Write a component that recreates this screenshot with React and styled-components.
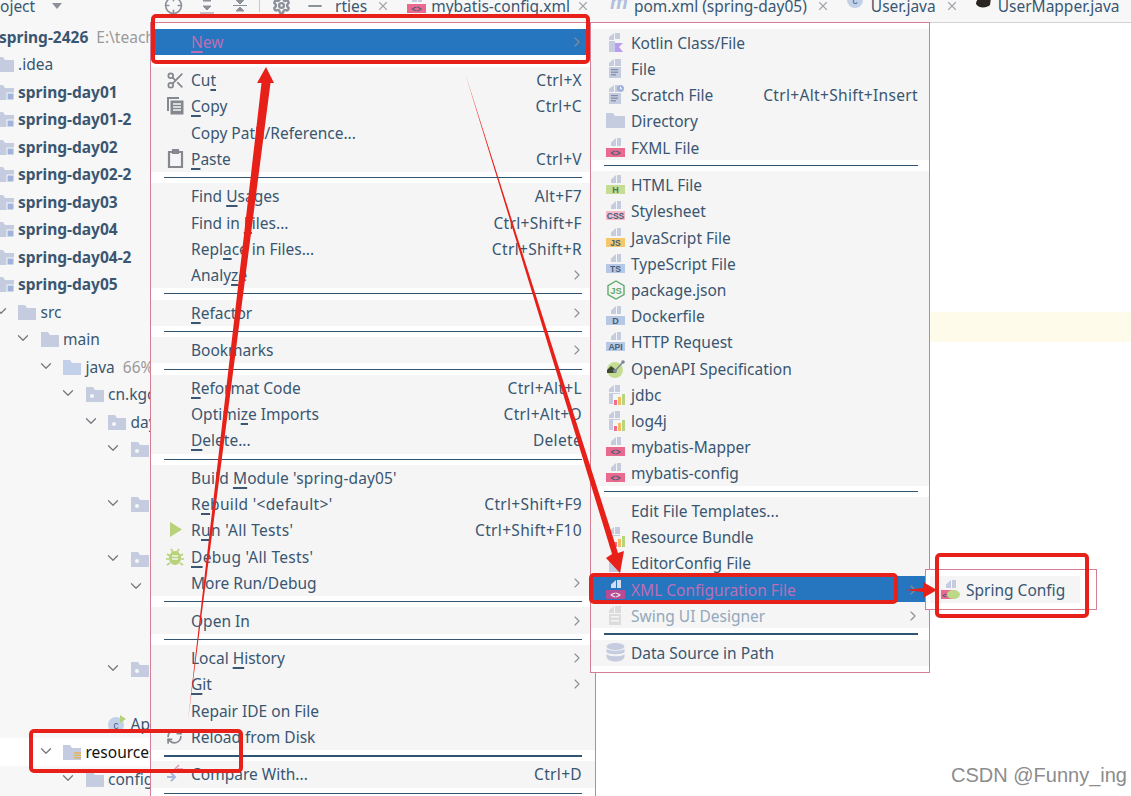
import React from "react";
import styled, { createGlobalStyle } from "styled-components";
import { X, Settings, Minus, Scissors, RefreshCw, Crosshair, ChevronDown, ChevronRight } from "lucide-react";

const GlobalStyle = createGlobalStyle`
  html, body {
    margin: 0;
    padding: 0;
    width: 1131px;
    height: 796px;
    overflow: hidden;
    background: #fff;
  }
  * { box-sizing: border-box; }
`;

const Page = styled.div`
  position: relative;
  display: flex;
  width: 1131px;
  height: 796px;
  overflow: hidden;
  background: #fff;
  color: #3a5671;
  font-family: "Noto Sans", "Open Sans", sans-serif;
  font-size: 15.5px;
`;

const Sidebar = styled.div`
  width: 330px;
  flex-shrink: 0;
  background: #f7f7f7;
`;

const ToolHeader = styled.div`
  display: flex;
  height: 23px;
  overflow: hidden;
  align-items: flex-start;
`;

const ToolTitle = styled.div`
  width: 52px;
  line-height: 12px;
  flex-shrink: 0;
`;

const TitleArrow = styled.div`
  width: 0;
  height: 0;
  margin: 3px 95px 0 0;
  border-left: 5px solid transparent;
  border-right: 5px solid transparent;
  border-top: 6px solid #8b9099;
  flex-shrink: 0;
`;

const ToolButton = styled.div`
  width: 33px;
  display: flex;
  justify-content: center;
  margin-top: -4px;
  color: #8b9099;
  flex-shrink: 0;
`;

const ToolDivider = styled.div`
  width: 1px;
  height: 12px;
  margin: 0 5px 0 3px;
  background: #c9c9c9;
  flex-shrink: 0;
`;

const indent = (depth) => depth * 22.5 - 4.5;

const TreeRow = styled.div`
  display: flex;
  align-items: center;
  height: 27.5px;
  white-space: nowrap;
  background: ${(p) => (p.$selected ? "#fff" : "transparent")};
  margin-left: ${(p) => Math.min(0, indent(p.$depth))}px;
  padding-left: ${(p) => Math.max(0, indent(p.$depth))}px;
  color: ${(p) => (p.$selected ? "#111" : "#3a5671")};
  font-weight: ${(p) => (p.$bold ? 700 : 400)};
`;

const TreeChevron = styled.div`
  width: 22.5px;
  display: flex;
  color: #77797f;
  flex-shrink: 0;

  svg {
    margin: -2px 0 0 -4px;
  }
`;

const TreeIcon = styled.div`
  width: 22.5px;
  height: 18px;
  flex-shrink: 0;
`;

const Hint = styled.span`
  margin-left: 8px;
  color: #9a9a9a;
  font-weight: 400;
`;

const Content = styled.div`
  flex: 1;
  min-width: 0;
`;

const TabBar = styled.div`
  display: flex;
  align-items: flex-start;
  height: 23px;
  padding-left: 5px;
  background: #f7f7f7;
  border-bottom: 1px solid #d2d2d2;
  overflow: hidden;
`;

const Tab = styled.div`
  display: flex;
  align-items: flex-start;
  flex-shrink: 0;
  margin-right: ${(p) => p.$gap}px;
  line-height: 12px;
  white-space: nowrap;
`;

const TabIcon = styled.div`
  width: 24px;
  height: 12px;
  flex-shrink: 0;
  margin-top: -6px;
`;

const TabClose = styled.div`
  display: flex;
  margin: -1px 0 0 ${(p) => p.$gap || 9}px;
  color: #a3a7ad;
`;

const Editor = styled.div`
  padding-top: 289px;
`;

const CaretLine = styled.div`
  height: 30px;
  background: #fffbea;
`;

const Menu = styled.div`
  position: absolute;
  left: ${(p) => p.$left}px;
  top: ${(p) => p.$top}px;
  width: ${(p) => p.$width}px;
  padding: ${(p) => p.$pad}px 0;
  background: #fff;
  border: 1px solid #d67d96;
`;

const MenuRow = styled.div`
  display: flex;
  align-items: center;
  height: 26.2px;
  padding-left: 15px;
  padding-right: ${(p) => p.$inset}px;
  padding-top: ${(p) => p.$nudge || 0}px;
  white-space: nowrap;
  background: ${(p) => (p.$active ? "#2675bf" : "#f5f5f5")};
  color: ${(p) => (p.$active ? "#bd6fb4" : p.$disabled ? "#92a8bc" : "#3a5671")};
`;

const MenuIcon = styled.div`
  width: 25px;
  height: 20px;
  flex-shrink: 0;
  display: flex;
  align-items: center;
`;

const MenuLabel = styled.span`
  flex: 1;
  letter-spacing: ${(p) => p.$spread || 0}px;
`;

const Keys = styled.span`
  letter-spacing: 0.33px;
`;

const Mnemonic = styled.span`
  text-decoration: underline;
  text-underline-offset: 3px;
  text-decoration-thickness: 1.5px;
`;

const RowChevron = styled.div`
  display: flex;
  color: #8a8d92;
  margin-right: -3px;
`;

const Separator = styled.div`
  display: flex;
  align-items: center;
  height: ${(p) => (p.$tall ? 11.9 : 11.5)}px;
  padding: 0 ${(p) => p.$inset}px 0 13px;
`;

const SeparatorLine = styled.div`
  width: 100%;
  height: ${(p) => (p.$thick ? 2 : 1)}px;
  background: #305472;
`;

const SpringMenu = styled.div`
  position: absolute;
  left: 925px;
  top: 569px;
  width: 172px;
  height: 41px;
  padding: 6px 16px 6px 4px;
  background: #fff;
  border: 1px solid #d67d96;
`;

const SpringRow = styled.div`
  display: flex;
  align-items: center;
  height: 27px;
  padding-left: 11px;
  background: #f5f5f5;
  white-space: nowrap;
`;

const Annotations = styled.svg`
  position: absolute;
  left: 0;
  top: 0;
  width: 1131px;
  height: 796px;
  pointer-events: none;
`;

const Watermark = styled.div`
  position: absolute;
  right: 4px;
  top: 764px;
  color: #8c8c8c;
  font-family: "Liberation Sans", sans-serif;
  font-size: 20px;
  white-space: nowrap;
`;

const Doc = ({ c = "#c5cce0" }) => (
  <path d="M5 8V4.5L10 0v8zM11 0h4v8h-4z" fill={c} />
);

const Band = ({ color, text, ink = "#44607a", size = 8.5 }) => (
  <svg width="19" height="20" viewBox="0 0 19 20">
    <Doc />
    <rect x="0" y="10" width="19" height="9" fill={color} />
    <text x="9.5" y="18" textAnchor="middle" fontSize={size} fontWeight="700" fill={ink} fontFamily="Liberation Sans">
      {text}
    </text>
  </svg>
);

const Bars = () => (
  <>
    <rect x="8" y="15" width="3" height="5" fill="#ef6d8f" />
    <rect x="12" y="12" width="3" height="8" fill="#f2bc5f" />
    <rect x="16" y="9" width="3" height="11" fill="#b9d47f" />
  </>
);

const FileLines = () => (
  <g fill="#7d8ba8">
    <rect x="5" y="10" width="7" height="1.2" />
    <rect x="5" y="12.6" width="7" height="1.2" />
    <rect x="5" y="15.2" width="5" height="1.2" />
  </g>
);

const Small = ({ children }) => (
  <svg width="19" height="20" viewBox="0 0 19 20">
    {children}
  </svg>
);

const ICONS = {
  kotlin: (
    <Small>
      <path d="M3 7V4L8 0v7zM9 0h5v6H9zM3 8h6v11H3z" fill="#c5cce0" />
      <path d="M9 10h8l-4 4 4 5H9z" fill="#b99bf0" />
    </Small>
  ),
  file: (
    <Small>
      <path d="M3 7V4L8 0v7zM9 0h6v7H9zM3 8h12v11H3z" fill="#c5cce0" />
      <FileLines />
    </Small>
  ),
  scratch: (
    <Small>
      <path d="M3 7V4L8 0v7zM9 0h3v7H9zM3 8h12v11H3z" fill="#c5cce0" />
      <FileLines />
      <circle cx="14.5" cy="3.5" r="3.5" fill="#a0b2dc" />
      <path d="M14.5 1.8v2h1.6" stroke="#fff" fill="none" />
    </Small>
  ),
  directory: (
    <Small>
      <path d="M0 2h7l2 3h10v12H0z" fill="#c5cce0" />
    </Small>
  ),
  xml: <Band color="#ea6a8f" text="<>" />,
  html: <Band color="#c5dc93" text="H" ink="#4d7a5a" size={9} />,
  css: <Band color="#f5b9c7" text="CSS" />,
  js: <Band color="#f5c76d" text="JS" />,
  ts: <Band color="#b7c7e6" text="TS" />,
  docker: <Band color="#b7c7e6" text="D" size={9} />,
  api: <Band color="#b7c7e6" text="API" />,
  node: (
    <svg width="20" height="20" viewBox="0 0 20 20">
      <path d="M10 1l8 4.6v9L10 19l-8-4.4v-9z" fill="none" stroke="#5eab6b" strokeWidth="1.4" />
      <text x="10" y="13.5" textAnchor="middle" fontSize="9.5" fontWeight="700" fill="#5eab6b" fontFamily="Liberation Sans">
        JS
      </text>
    </svg>
  ),
  openapi: (
    <svg width="20" height="20" viewBox="0 0 20 20">
      <circle cx="9" cy="11" r="8" fill="#c5dc93" />
      <path d="M1 11l4-4 4 3 1 4H1z" fill="#3f4a35" />
      <path d="M9 12l8-9" stroke="#7e8796" strokeWidth="1.5" />
      <circle cx="17" cy="3" r="1.8" fill="#7e8796" />
      <circle cx="9" cy="12" r="2" fill="#7e8796" />
    </svg>
  ),
  bundle: (
    <Small>
      <path d="M3 7V4L8 0v7zM9 0h5v7H9zM3 8h4v11H3zM7 8h7v1H7z" fill="#c5cce0" />
      <Bars />
    </Small>
  ),
  editorconfig: (
    <Small>
      <path d="M3 7V4L8 0v7zM9 0h6v7H9zM3 8h12v11H3z" fill="#c5cce0" />
    </Small>
  ),
  xmlActive: (
    <svg width="19" height="20" viewBox="0 0 19 20">
      <Doc c="#d6dcf0" />
      <rect x="0" y="10" width="19" height="9" fill="#b94a94" />
      <text x="9.5" y="18" textAnchor="middle" fontSize="8.5" fontWeight="700" fill="#eee" fontFamily="Liberation Sans">
        {"<>"}
      </text>
    </svg>
  ),
  swing: (
    <Small>
      <path d="M3 7V4L8 0v7zM9 0h6v7H9zM3 8h12v11H3z" fill="#dcdcdc" />
      <g fill="#f5f5f5">
        <rect x="5" y="10" width="8" height="1.5" />
        <rect x="5" y="14" width="8" height="1.5" />
      </g>
    </Small>
  ),
  database: (
    <svg width="19" height="20" viewBox="0 0 19 20">
      <g fill="#c5cce0">
        <ellipse cx="9.5" cy="3.5" rx="9" ry="3.5" />
        <path d="M.5 5.5C2 8.5 17 8.5 18.5 5.5v3.5C17 12 2 12 .5 9z" />
        <path d="M.5 11C2 14 17 14 18.5 11v3C17 20 2 20 .5 14z" />
      </g>
    </svg>
  ),
  scissors: <Scissors size={19} color="#85888f" strokeWidth={2.2} />,
  copy: (
    <Small>
      <path d="M1 2h2v13H1zM1 1h12v2H1z" fill="#85888f" />
      <rect x="4.5" y="4.5" width="13" height="14" fill="#85888f" />
      <path d="M7 8h8M7 11h8M7 14h8" stroke="#f5f5f5" strokeWidth="1.3" />
    </Small>
  ),
  paste: (
    <Small>
      <path d="M3 3h4V1h5v2h4v15H3z" fill="none" stroke="#85888f" strokeWidth="2.2" />
      <rect x="6" y="1" width="7" height="4" fill="#85888f" />
    </Small>
  ),
  run: (
    <Small>
      <path d="M4 2l12 7.500-12 7.500z" fill="#b7d278" />
    </Small>
  ),
  debug: (
    <Small>
      <ellipse cx="9" cy="11" rx="6" ry="7" fill="#b7d278" />
      <path d="M1 7l3 2M17 7l-3 2M0 12h3M18 12h-3M1 18l3-2M17 18l-3-2M5 2l2 3M13 2l-2 3" stroke="#b7d278" strokeWidth="1.6" />
      <path d="M6 9h6M6 12h6" stroke="#f5f5f5" strokeWidth="1.3" />
    </Small>
  ),
  reload: <RefreshCw size={17} color="#85888f" strokeWidth={2.4} />,
  compare: (
    <Small>
      <path d="M1 13h7M5 9l4 4-4 4" stroke="#a9b5d8" strokeWidth="2" fill="none" />
      <path d="M17 5h-6M13 1l-4 4 4 4" stroke="#e09aaf" strokeWidth="1.6" fill="none" />
    </Small>
  ),
  springXml: (
    <svg width="19" height="20" viewBox="0 0 19 20">
      <Doc />
      <rect x="0" y="10" width="14" height="9" fill="#ea6a8f" />
      <ellipse cx="12.5" cy="14.5" rx="6.5" ry="4.5" fill="#bcd986" />
      <text x="1" y="18" fontSize="8" fontWeight="700" fill="#44607a" fontFamily="Liberation Sans">
        {"<"}
      </text>
    </svg>
  ),
};

const Folder = ({ kind }) => {
  const fill = kind === "source" ? "#c3d0ea" : "#c5cce0";
  return (
    <svg width="18" height="15" viewBox="0 0 18 15">
      <path d="M0 0h7l2 3h9v12H0z" fill={fill} />
      {kind === "package" && <circle cx="6" cy="9" r="2" fill="#f7f7f7" />}
      {kind === "module" && <rect x="11" y="8" width="7" height="7" fill="#a3b4dc" stroke="#f7f7f7" />}
      {kind === "resources" && (
        <path d="M11 8h7M11 10.4h7M11 12.8h7" stroke="#e0b25c" strokeWidth="1.4" />
      )}
    </svg>
  );
};

const TREE = [
  { depth: -0.85, label: "spring-2426", bold: true, hint: "E:\\teach", plain: true },
  { depth: -1, label: ".idea", folder: "plain" },
  ...["spring-day01", "spring-day01-2", "spring-day02", "spring-day02-2", "spring-day03", "spring-day04", "spring-day04-2", "spring-day05"].map(
    (label) => ({ depth: -1, label, bold: true, folder: "module" })
  ),
  { depth: 0, label: "src", folder: "plain", open: true },
  { depth: 1, label: "main", folder: "plain", open: true },
  { depth: 2, label: "java", folder: "source", open: true, hint: "66%" },
  { depth: 3, label: "cn.kgc", folder: "package", open: true },
  { depth: 4, label: "day05", folder: "package", open: true },
  { depth: 5, folder: "package", open: true },
  { depth: 5 },
  { depth: 5, folder: "package", open: true },
  { depth: 5 },
  { depth: 5, folder: "package", open: true },
  { depth: 6, open: true },
  { depth: 5 },
  { depth: 5 },
  { depth: 5, folder: "package", open: true },
  { depth: 5 },
  { depth: 4, label: "App", appClass: true },
  { depth: 2, label: "resources", folder: "resources", open: true, selected: true },
  { depth: 3, label: "config", folder: "plain", open: true },
];

const MAIN_MENU = [
  { label: "_New", arrow: true, active: true },
  { gap: true },
  { label: "Cu_t", icon: "scissors", keys: "Ctrl+X" },
  { label: "_Copy", icon: "copy", keys: "Ctrl+C" },
  { label: "Copy Path/Reference..." },
  { label: "_Paste", icon: "paste", keys: "Ctrl+V" },
  { sep: true },
  { label: "Find _Usages", keys: "Alt+F7" },
  { label: "Find in _Files...", keys: "Ctrl+Shift+F" },
  { label: "Repl_ace in Files...", keys: "Ctrl+Shift+R" },
  { label: "Analy_ze", arrow: true },
  { sep: true },
  { label: "_Refactor", arrow: true },
  { sep: true },
  { label: "Bookmarks", arrow: true },
  { sep: true },
  { label: "_Reformat Code", keys: "Ctrl+Alt+L" },
  { label: "Optimi_ze Imports", keys: "Ctrl+Alt+O" },
  { label: "_Delete...", keys: "Delete" },
  { sep: true },
  { label: "Build _Module 'spring-day05'", spread: 0.12 },
  { label: "R_ebuild '<default>'", keys: "Ctrl+Shift+F9", spread: 0.33 },
  { label: "R_un 'All Tests'", icon: "run", keys: "Ctrl+Shift+F10", spread: 0.33 },
  { label: "_Debug 'All Tests'", icon: "debug", spread: 0.3 },
  { label: "More Run/Debug", arrow: true },
  { sep: true },
  { label: "Open In", arrow: true },
  { sep: true },
  { label: "Local _History", arrow: true },
  { label: "_Git", arrow: true },
  { label: "Repair IDE on File" },
  { label: "Reload from Disk", icon: "reload" },
  { sep: true, thick: true },
  { label: "Compare With...", icon: "compare", keys: "Ctrl+D" },
  { sep: true },
];

const NEW_MENU = [
  { label: "Kotlin Class/File", icon: "kotlin" },
  { label: "File", icon: "file" },
  { label: "Scratch File", icon: "scratch", keys: "Ctrl+Alt+Shift+Insert" },
  { label: "Directory", icon: "directory" },
  { label: "FXML File", icon: "xml" },
  { sep: true },
  { label: "HTML File", icon: "html" },
  { label: "Stylesheet", icon: "css" },
  { label: "JavaScript File", icon: "js" },
  { label: "TypeScript File", icon: "ts" },
  { label: "package.json", icon: "node" },
  { label: "Dockerfile", icon: "docker" },
  { label: "HTTP Request", icon: "api" },
  { label: "OpenAPI Specification", icon: "openapi" },
  { label: "jdbc", icon: "bundle" },
  { label: "log4j", icon: "bundle" },
  { label: "mybatis-Mapper", icon: "xml" },
  { label: "mybatis-config", icon: "xml" },
  { sep: true },
  { label: "Edit File Templates..." },
  { label: "Resource Bundle", icon: "bundle" },
  { label: "EditorConfig File", icon: "editorconfig" },
  { label: "XML Configuration File", icon: "xmlActive", arrow: true, active: true },
  { label: "Swing UI Designer", icon: "swing", arrow: true, disabled: true },
  { sep: true, thick: true },
  { label: "Data Source in Path", icon: "database" },
];

// "_" marks the letter the menu underlines
const withMnemonic = (label) => {
  const at = label.indexOf("_");
  if (at < 0) return label;
  return (
    <>
      {label.slice(0, at)}
      <Mnemonic>{label[at + 1]}</Mnemonic>
      {label.slice(at + 2)}
    </>
  );
};

const MenuItems = ({ items, inset, nudge }) =>
  items.map((item, i) => {
    if (item.gap) return <Separator key={i} $inset={inset} $tall />;
    if (item.sep)
      return (
        <Separator key={i} $inset={inset}>
          <SeparatorLine $thick={item.thick} />
        </Separator>
      );
    return (
      <MenuRow key={i} $inset={inset} $nudge={nudge} $active={item.active} $disabled={item.disabled}>
        <MenuIcon>{item.icon && ICONS[item.icon]}</MenuIcon>
        <MenuLabel $spread={item.spread}>{withMnemonic(item.label)}</MenuLabel>
        {item.keys && <Keys>{item.keys}</Keys>}
        {item.arrow && (
          <RowChevron>
            <ChevronRight size={16} strokeWidth={1.6} />
          </RowChevron>
        )}
      </MenuRow>
    );
  });

const Tree = () =>
  TREE.map((node, i) => (
    <TreeRow key={i} $depth={node.depth} $bold={node.bold} $selected={node.selected}>
      <TreeChevron>{node.open && <ChevronDown size={18} strokeWidth={1.7} />}</TreeChevron>
      {!node.plain && (
        <TreeIcon>
          {node.folder && <Folder kind={node.folder} />}
          {node.appClass && (
            <svg width="18" height="18" viewBox="0 0 18 18">
              <circle cx="8" cy="10" r="8" fill="#c3d0ea" />
              <path d="M12 0l6 4-6 4z" fill="#b7d278" />
              <text x="8" y="13.5" textAnchor="middle" fontSize="10" fill="#44607a" fontFamily="Liberation Sans">
                c
              </text>
            </svg>
          )}
        </TreeIcon>
      )}
      {node.label}
      {node.hint && <Hint>{node.hint}</Hint>}
    </TreeRow>
  ));

export default function App() {
  return (
    <Page>
      <GlobalStyle />
      <Sidebar>
        <ToolHeader>
          <ToolTitle>oject</ToolTitle>
          <TitleArrow />
          <ToolButton>
            <Crosshair size={19} />
          </ToolButton>
          <ToolButton>
            <svg width="16" height="18" viewBox="0 0 16 18">
              <path d="M8 1l4 4H4zM8 14l4-4H4zM1 17h14" fill="#8b9099" stroke="#8b9099" />
            </svg>
          </ToolButton>
          <ToolButton>
            <svg width="16" height="18" viewBox="0 0 16 18">
              <path d="M8 8l4-4H4zM8 11l4 4H4zM1 9.5h14" fill="#8b9099" stroke="#8b9099" />
            </svg>
          </ToolButton>
          <ToolDivider />
          <ToolButton>
            <Settings size={19} strokeWidth={3} />
          </ToolButton>
          <ToolButton>
            <Minus size={20} strokeWidth={2.6} />
          </ToolButton>
        </ToolHeader>
        <Tree />
      </Sidebar>
      <Content>
        <TabBar>
          <Tab $gap={17}>
            rties
            <TabClose>
              <X size={14} />
            </TabClose>
          </Tab>
          <Tab $gap={20}>
            <TabIcon>
              <Band color="#ea6a8f" text="<>" />
            </TabIcon>
            mybatis-config.xml
            <TabClose $gap={6}>
              <X size={14} />
            </TabClose>
          </Tab>
          <Tab $gap={17}>
            <TabIcon>
              <svg width="20" height="20" viewBox="0 0 20 20">
                <text x="0" y="15" fontSize="20" fontWeight="700" fontStyle="italic" fill="#b3bfdc" fontFamily="Liberation Sans">
                  m
                </text>
              </svg>
            </TabIcon>
            pom.xml (spring-day05)
            <TabClose>
              <X size={14} />
            </TabClose>
          </Tab>
          <Tab $gap={15}>
            <TabIcon>
              <svg width="17" height="20" viewBox="0 0 17 20">
                <circle cx="8" cy="6" r="8" fill="#c3d0ea" />
                <text x="8" y="9.5" textAnchor="middle" fontSize="10" fill="#44607a" fontFamily="Liberation Sans">
                  c
                </text>
              </svg>
            </TabIcon>
            User.java
            <TabClose>
              <X size={14} />
            </TabClose>
          </Tab>
          <Tab $gap={0}>
            <TabIcon>
              <svg width="19" height="20" viewBox="0 0 19 20">
                <path d="M2 10c0-5 5-8 10-8l5 2-1 7c-3 3-11 4-14-1z" fill="#2a2523" />
                <path d="M7 2h10v4H9z" fill="#2fc0c4" />
              </svg>
            </TabIcon>
            UserMapper.java
            <TabClose>
              <X size={14} />
            </TabClose>
          </Tab>
        </TabBar>
        <Editor>
          <CaretLine />
        </Editor>
      </Content>

      <Menu $left={150} $top={22} $width={446} $pad={6}>
        <MenuItems items={MAIN_MENU} inset={13} />
      </Menu>
      <Menu $left={590} $top={22} $width={340} $pad={6}>
        <MenuItems items={NEW_MENU} inset={11} nudge={1.5} />
      </Menu>
      <SpringMenu>
        <SpringRow>
          <MenuIcon>{ICONS.springXml}</MenuIcon>
          Spring Config
        </SpringRow>
      </SpringMenu>

      <Annotations viewBox="0 0 1131 796">
        <g fill="none" stroke="#e8201a" strokeWidth="4">
          <rect x="153" y="16" width="435" height="46" rx="3" />
          <rect x="31" y="731" width="210" height="40" rx="3" />
          <rect x="591" y="575" width="305" height="27" rx="3" />
          <rect x="937" y="555" width="150" height="61" rx="3" />
        </g>
        <g fill="#e8201a">
          <path d="M266 67L274 83H270.500L188 720L261.500 83H257z" />
          <path d="M465 73L612 554L606 558L620 573L624 551L618 553z" />
          <path d="M905 590L923 588V582L937 590L923 598V592z" />
        </g>
      </Annotations>
      <Watermark>CSDN @Funny_ing</Watermark>
    </Page>
  );
}
